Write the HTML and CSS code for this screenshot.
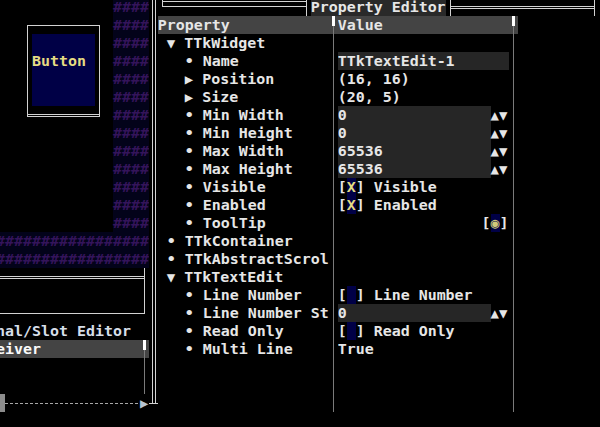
FILE: index.html
```html
<!DOCTYPE html>
<html>
<head>
<meta charset="utf-8">
<link rel="stylesheet" href="styles.css">
</head>
<body>
<div class="term">
<div class="row"><span class="lp">             <span class="hs">####</span></span><span class="k vv"></span><span class="k t18"></span><span class="k w15 h2t"></span><span class="k t34"></span><span class="ttl">Property Editor</span><span class="k t50"></span><span class="k w15 h2"></span><span class="k t66"></span></div>
<div class="row"><span class="lp">   <span class="k ctl"></span><span class="k w7 h1"></span><span class="k ctr"></span> <span class="hs">####</span></span><span class="k vv"></span><span class="hdr"><span class="tc">Property</span><span class="k hsep"></span><span class="vc">Value</span><span class="k hsep"></span></span></div>
<div class="row"><span class="lp">   <span class="k vl"></span><span class="btn"></span><span class="k vl"></span> <span class="hs">####</span></span><span class="k vv"></span><span class="tc"> <span class="k tri">▼</span> TTkWidget</span><span class="k vs"></span><span class="vc"></span><span class="k vs"></span></div>
<div class="row"><span class="lp">   <span class="k vl"></span><span class="btn">Button</span><span class="k vl"></span> <span class="hs">####</span></span><span class="k vv"></span><span class="tc">   <span class="k">•</span> Name</span><span class="k vs"></span><span class="vc ed">TTkTextEdit-1</span><span class="k vs"></span></div>
<div class="row"><span class="lp">   <span class="k vl"></span><span class="btn"></span><span class="k vl"></span> <span class="hs">####</span></span><span class="k vv"></span><span class="tc">   <span class="k tri">▶</span> Position</span><span class="k vs"></span><span class="vc">(16, 16)</span><span class="k vs"></span></div>
<div class="row"><span class="lp">   <span class="k vl"></span><span class="btn"></span><span class="k vl"></span> <span class="hs">####</span></span><span class="k vv"></span><span class="tc">   <span class="k tri">▶</span> Size</span><span class="k vs"></span><span class="vc">(20, 5)</span><span class="k vs"></span></div>
<div class="row"><span class="lp">   <span class="k cbl"></span><span class="k w7 h2"></span><span class="k cbr"></span> <span class="hs">####</span></span><span class="k vv"></span><span class="tc">   <span class="k">•</span> Min Width</span><span class="k vs"></span><span class="vc"><span class="spin">0</span><span class="k tri">▲</span><span class="k tri">▼</span></span><span class="k vs"></span></div>
<div class="row"><span class="lp">             <span class="hs">####</span></span><span class="k vv"></span><span class="tc">   <span class="k">•</span> Min Height</span><span class="k vs"></span><span class="vc"><span class="spin">0</span><span class="k tri">▲</span><span class="k tri">▼</span></span><span class="k vs"></span></div>
<div class="row"><span class="lp">             <span class="hs">####</span></span><span class="k vv"></span><span class="tc">   <span class="k">•</span> Max Width</span><span class="k vs"></span><span class="vc"><span class="spin">65536</span><span class="k tri">▲</span><span class="k tri">▼</span></span><span class="k vs"></span></div>
<div class="row"><span class="lp">             <span class="hs">####</span></span><span class="k vv"></span><span class="tc">   <span class="k">•</span> Max Height</span><span class="k vs"></span><span class="vc"><span class="spin">65536</span><span class="k tri">▲</span><span class="k tri">▼</span></span><span class="k vs"></span></div>
<div class="row"><span class="lp">             <span class="hs">####</span></span><span class="k vv"></span><span class="tc">   <span class="k">•</span> Visible</span><span class="k vs"></span><span class="vc">[<span class="k ck">X</span>] Visible</span><span class="k vs"></span></div>
<div class="row"><span class="lp">             <span class="hs">####</span></span><span class="k vv"></span><span class="tc">   <span class="k">•</span> Enabled</span><span class="k vs"></span><span class="vc">[<span class="k ck">X</span>] Enabled</span><span class="k vs"></span></div>
<div class="row"><span class="lp">             <span class="hs">####</span></span><span class="k vv"></span><span class="tc">   <span class="k">•</span> ToolTip</span><span class="k vs"></span><span class="vc">                [<span class="k ck dot">◉</span>]</span><span class="k vs"></span></div>
<div class="row"><span class="lp"><span class="hs">#################</span></span><span class="k vv"></span><span class="tc"> <span class="k">•</span> TTkContainer</span><span class="k vs"></span><span class="vc"></span><span class="k vs"></span></div>
<div class="row"><span class="lp"><span class="hs">#################</span></span><span class="k vv"></span><span class="tc"> <span class="k">•</span> TTkAbstractScrol</span><span class="k vs"></span><span class="vc"></span><span class="k vs"></span></div>
<div class="row"><span class="lp"><span class="k w16 h2"></span><span class="k t66"></span></span><span class="k vv"></span><span class="tc"> <span class="k tri">▼</span> TTkTextEdit</span><span class="k vs"></span><span class="vc"></span><span class="k vs"></span></div>
<div class="row"><span class="lp">                <span class="k vl"></span></span><span class="k vv"></span><span class="tc">   <span class="k">•</span> Line Number</span><span class="k vs"></span><span class="vc">[<span class="k ck"> </span>] Line Number</span><span class="k vs"></span></div>
<div class="row"><span class="lp"><span class="k w16 h1"></span><span class="k cru"></span></span><span class="k vv"></span><span class="tc">   <span class="k">•</span> Line Number St</span><span class="k vs"></span><span class="vc"><span class="spin">0</span><span class="k tri">▲</span><span class="k tri">▼</span></span><span class="k vs"></span></div>
<div class="row"><span class="lp"><span class="sl">nal/Slot Editor</span></span><span class="k vv"></span><span class="tc">   <span class="k">•</span> Read Only</span><span class="k vs"></span><span class="vc">[<span class="k ck"> </span>] Read Only</span><span class="k vs"></span></div>
<div class="row"><span class="lp"><span class="band">eiver           <span class="k hsep"></span></span></span><span class="k vv"></span><span class="tc">   <span class="k">•</span> Multi Line</span><span class="k vs"></span><span class="vc">True</span><span class="k vs"></span></div>
<div class="row"><span class="lp">                <span class="k vs"></span></span><span class="k vv"></span><span class="tc"></span><span class="k vs"></span><span class="vc"></span><span class="k vs"></span></div>
<div class="row"><span class="lp">                <span class="k vs"></span></span><span class="k vv"></span><span class="tc"></span><span class="k vs"></span><span class="vc"></span><span class="k vs"></span></div>
<div class="row"><span class="lp"><span class="k blk"></span><span class="k w15 dash"></span><span class="k tri arr">▶</span></span><span class="k bj"></span><span class="tc"></span><span class="k vs"></span><span class="vc"></span><span class="k vs"></span></div>
</div>
</body>
</html>
```
FILE: styles.css
```css
:root {
  --L: linear-gradient(#d2d2d2, #d2d2d2);
  --S: linear-gradient(#7a7a7a, #7a7a7a);
}
html, body {
  margin: 0;
  padding: 0;
  background: #000;
  overflow: hidden;
}
.term {
  margin: -2px 0 0 -4px;
  width: 620px;
  font-family: "DejaVu Sans Mono", monospace;
  font-weight: bold;
  font-size: 14.95px;
  line-height: 18px;
  color: #e6e6e6;
}
.row {
  height: 18px;
  white-space: pre;
  overflow: visible;
}
.k, .lp, .tc, .vc, .btn, .spin, .hdr, .band, .ttl, .hs, .sl {
  display: inline-block;
  height: 18px;
  vertical-align: top;
}
.k { width: 1ch; text-align: center; }
.w7 { width: 7ch; }
.w15 { width: 15ch; }
.w16 { width: 16ch; }
.lp { width: 17ch; overflow: hidden; }
.tc { width: 19ch; overflow: hidden; }
.vc { width: 19ch; overflow: hidden; }
.hdr { background: #444; }
.ttl { background: #292929; }
.ed { background: #262626; }
.spin { width: 17ch; background: #262626; }
.btn { width: 7ch; background: #000046; color: #e6dc82; }
.hs { background: #03031a; color: #34145a; }
.sl { color: #d6dee8; }
.band { width: 17ch; background: #444; color: #fafafa; }
.ck { background: #000046; color: #e6dc82; }
.dot { color: #cfc97a; }
.tri { font-size: 14px; }
.arr { color: #b8c4d2; }
.blk { background: #8c8c8c; }

.vv { background: var(--L) 3px 0/1px 100% no-repeat, var(--L) 6px 0/1px 100% no-repeat; }
.vl { background: var(--L) 4px 0/1px 100% no-repeat; }
.vs { background: var(--S) 4px 0/1px 100% no-repeat; }
.h1 { background: var(--L) 0 9px/100% 1px no-repeat; }
.h2 { background: var(--L) 0 8px/100% 1px no-repeat, var(--L) 0 10px/100% 1px no-repeat; }
.h2t { background: var(--L) 0 3px/100% 1px no-repeat, var(--L) 0 8px/100% 1px no-repeat; }
.t18 { background: var(--L) 4px 3px/6px 1px no-repeat, var(--L) 4px 8px/6px 1px no-repeat, var(--L) 4px 0/1px 9px no-repeat; }
.t34 { background: var(--L) 4px 0/1px 100% no-repeat, var(--L) 0 3px/5px 1px no-repeat, var(--L) 0 8px/5px 1px no-repeat; }
.t50 { background: var(--L) 4px 0/1px 100% no-repeat, var(--L) 4px 8px/6px 1px no-repeat, var(--L) 4px 10px/6px 1px no-repeat; }
.t66 { background: var(--L) 4px 0/1px 100% no-repeat, var(--L) 0 8px/5px 1px no-repeat, var(--L) 0 10px/5px 1px no-repeat; }
.ctl { background: var(--L) 4px 9px/1px 9px no-repeat, var(--L) 4px 9px/6px 1px no-repeat; }
.ctr { background: var(--L) 4px 9px/1px 9px no-repeat, var(--L) 0 9px/5px 1px no-repeat; }
.cbl { background: var(--L) 4px 0/1px 11px no-repeat, var(--L) 4px 8px/6px 1px no-repeat, var(--L) 4px 10px/6px 1px no-repeat; }
.cbr { background: var(--L) 4px 0/1px 11px no-repeat, var(--L) 0 8px/5px 1px no-repeat, var(--L) 0 10px/5px 1px no-repeat; }
.cru { background: var(--L) 4px 0/1px 10px no-repeat, var(--L) 0 9px/5px 1px no-repeat; }
.bj { background: var(--L) 3px 0/1px 10px no-repeat, var(--L) 6px 0/1px 10px no-repeat, var(--L) 0 9px/100% 1px no-repeat; }
.hsep { background: linear-gradient(#fff, #fff) 3px 0/3px 10px no-repeat, var(--S) 4px 10px/1px 8px no-repeat; }
.dash { background: repeating-linear-gradient(90deg, #a8a8a8 0 3px, transparent 3px 5px) 0 9px/100% 1px no-repeat; }
```
